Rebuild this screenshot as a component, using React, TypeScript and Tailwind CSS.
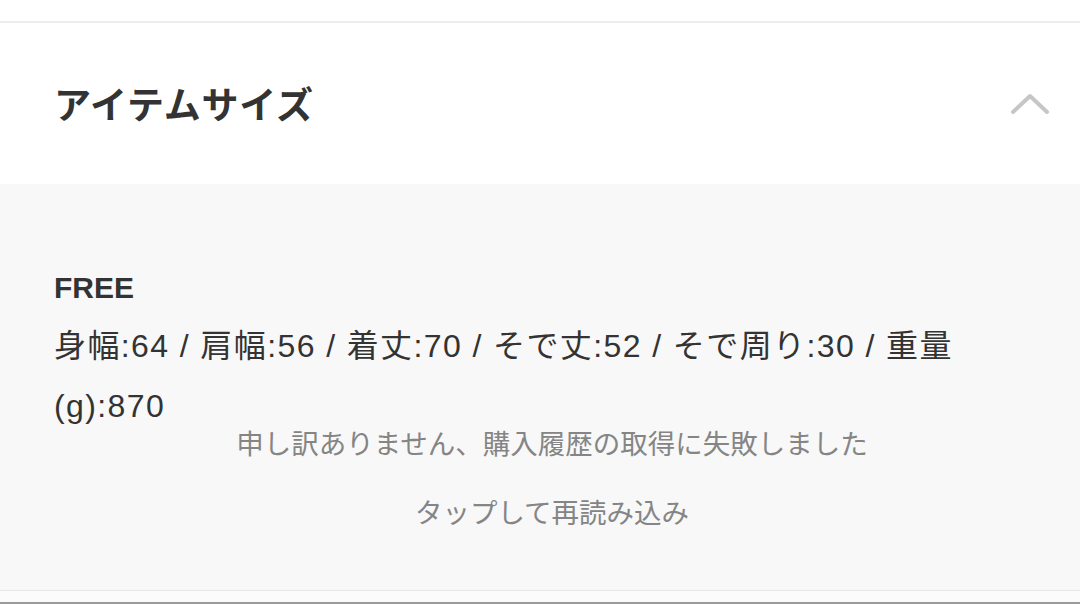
import React from "react";

const jp = { fontFamily: '"Noto Sans CJK JP", "Noto Sans", sans-serif' };
const latin = { fontFamily: '"Liberation Sans", "Noto Sans CJK JP", sans-serif' };

const Chevron = () => (
  <svg width="44" height="26" viewBox="0 0 44 26" fill="none">
    <path d="M5 21 L22 5 L39 21" stroke="#c6c6c6" strokeWidth="4" strokeLinecap="round" strokeLinejoin="round" />
  </svg>
);

const App = () => {
  return (
    <div className="w-[1080px] h-[604px] bg-white flex flex-col overflow-hidden" style={jp}>
      <div className="h-[21px] shrink-0 bg-white" />
      <div className="h-[2px] shrink-0 bg-[#ededed]" />

      {/* accordion header */}
      <div className="h-[161px] shrink-0 flex items-center justify-between pl-[54px] pr-[28px]">
        <h2 className="text-[37px] font-bold text-[#333333] tracking-[0.8px]">アイテムサイズ</h2>
        <Chevron />
      </div>

      {/* accordion body */}
      <div className="flex-1 bg-[#f8f8f8] pt-[78px] flex flex-col">
        <div className="px-[54px] text-[#333333]" style={latin}>
          <p className="text-[30px] font-bold leading-[52px]">FREE</p>
          <p className="text-[32px] leading-[60px] tracking-[1.4px] pt-[2px]">
            身幅:64 / 肩幅:56 / 着丈:70 / そで丈:52 / そで周り:30 / 重量
            <br />
            (g):870
          </p>
        </div>
        <div className="flex flex-col items-center pl-[24px] text-[27.5px] text-[#858585] leading-[40px] -mt-[14px]">
          <p>申し訳ありません、購入履歴の取得に失敗しました</p>
          <p className="mt-[29px]">タップして再読み込み</p>
        </div>
      </div>

      <div className="h-[1px] shrink-0 bg-[#e6e6e6]" />
      <div className="h-[11px] shrink-0 bg-[#fbfbfb]" />
      <div className="h-[2px] shrink-0 bg-[#9a9a9a]" />
    </div>
  );
};

export default App;
